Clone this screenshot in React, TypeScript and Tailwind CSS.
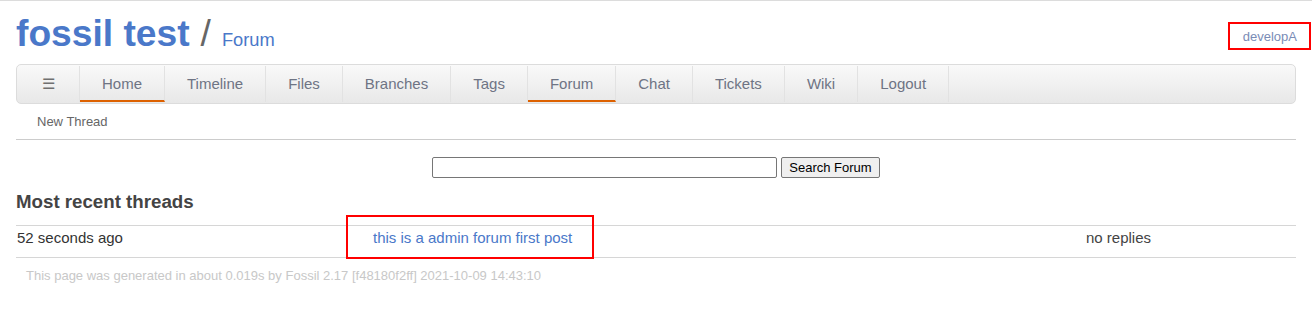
import React from 'react';

const navItems = ['Home', 'Timeline', 'Files', 'Branches', 'Tags', 'Forum', 'Chat', 'Tickets', 'Wiki', 'Logout'];
const activeItems = ['Home', 'Forum'];

export default function App() {
  return (
    <div
      className="min-h-[318px] bg-white border-t border-[#dcdcdc] px-4"
      style={{ fontFamily: '"Liberation Sans", Arial, sans-serif' }}
    >
      {/* header */}
      <div className="flex justify-between items-start pt-[13px]">
        <div className="flex items-baseline">
          <span className="text-[37.2px] leading-[38px] font-bold text-[#4a78c9]">fossil test</span>
          <span className="text-[37.2px] leading-[38px] text-[#666] ml-[11px] mr-[11px]">/</span>
          <span className="text-[18.3px] text-[#4a78c9]">Forum</span>
        </div>
        <div className="mt-[8px] -mr-[15px] border-2 border-[#f00] pl-[13px] pr-[12px] h-[28px] flex items-center">
          <span className="text-[13px] leading-[16px] text-[#7a8cb6] mt-[2px]">developA</span>
        </div>
      </div>

      {/* main menu */}
      <div className="mt-[11px] h-[40px] rounded-[5px] border border-[#dcdcdc] bg-gradient-to-b from-[#f9f9f9] to-[#e8e8e8] flex items-center">
        <div className="w-[63px] h-[36px] flex items-center justify-center border-r border-[#e2e2e2] text-[15px] text-[#707070]">
          ☰
        </div>
        {navItems.map((item) => (
          <div
            key={item}
            className={
              'h-[36px] px-[22px] flex items-center border-r border-[#e2e2e2] text-[15px] text-[#6e7484] ' +
              (activeItems.includes(item) ? 'border-b-2 border-b-[#dd6100] pt-[2px]' : '')
            }
          >
            {item}
          </div>
        ))}
      </div>

      {/* submenu */}
      <div className="pt-[10px] pb-[9px] pl-[21px] border-b border-[#cccccc] text-[13px] leading-[16px] text-[#666]">
        New Thread
      </div>

      {/* search */}
      <div className="mt-[17px] flex justify-center gap-[4px]">
        <input
          type="text"
          className="w-[345px] h-[21px] border border-[#767676] rounded-[2px] bg-white"
        />
        <button className="w-[99px] h-[21px] border border-[#767676] rounded-[2px] bg-[#efefef] text-[13px] text-black leading-none">
          Search Forum
        </button>
      </div>

      <h2 className="mt-[13px] text-[18.7px] leading-[22px] font-bold text-[#444]">Most recent threads</h2>

      {/* threads */}
      <div className="relative mt-[12px] border-t border-b border-[#d6d6d6] grid grid-cols-[357px_713px_1fr] pt-[2px] pb-[9px] text-[15px] leading-[20px]">
        <div className="pl-[1px] text-[#333]">52 seconds ago</div>
        <div className="text-[#4a78c9]">this is a admin forum first post</div>
        <div className="text-[#444]">no replies</div>
        <div className="absolute left-[330px] top-[-11px] w-[248px] h-[44px] border-2 border-[#f00]" />
      </div>

      <div className="mt-[10px] pl-[10px] text-[13px] leading-[16px] text-[#c8c8c8]">
        This page was generated in about 0.019s by Fossil 2.17 [f48180f2ff] 2021-10-09 14:43:10
      </div>
    </div>
  );
}
